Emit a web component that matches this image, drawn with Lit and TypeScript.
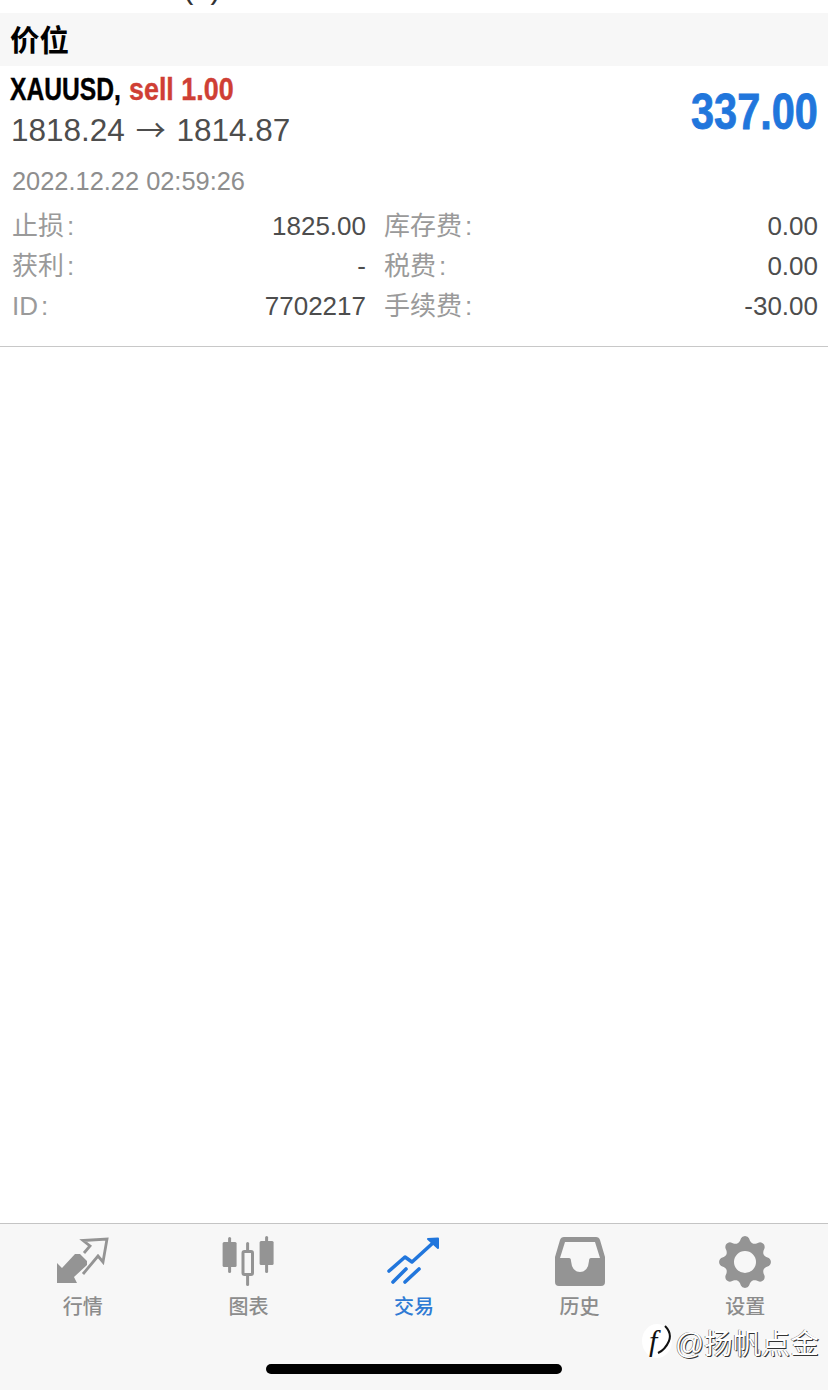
import { LitElement, html, css, svg } from "lit";
import { customElement } from "lit/decorators.js";

const GREY = "#949494";
const BLUE = "#2176dc";

function gearPath(): string {
  const pts: string[] = [];
  for (let i = 0; i < 192; i++) {
    const t = (i / 192) * Math.PI * 2;
    const c = Math.cos(8 * t);
    const r = 23 + 2.9 * Math.sign(c) * Math.pow(Math.abs(c), 0.7);
    pts.push(`${(27 + r * Math.sin(t)).toFixed(2)} ${(26 - r * Math.cos(t)).toFixed(2)}`);
  }
  return `M${pts.join(" L")} Z M27 15 A11 11 0 1 0 27 37 A11 11 0 1 0 27 15 Z`;
}

const icons = {
  quotes: svg`<svg width="54" height="52" viewBox="0 0 54 52">
    <path fill="${GREY}" d="M1 47 L1 27 L6 32 L19 18 L24 18 L31 25 L31 29 L18 41 L21 47 Z"/>
    <path fill="none" stroke="${GREY}" stroke-width="2.8" d="M28 17 L34 10 L27 4.5 L51 3 L47 26 L42 20 L27 38"/>
  </svg>`,
  chart: svg`<svg width="54" height="52" viewBox="0 0 54 52" fill="${GREY}">
    <rect x="7.1" y="1" width="3" height="36" rx="1.5"/><rect x="1.6" y="6" width="14" height="25" rx="1.5"/>
    <rect x="44.1" y="0" width="3" height="37" rx="1.5"/><rect x="38.6" y="5" width="14" height="24" rx="1.5"/>
    <rect x="25.1" y="6" width="3" height="44" rx="1.5"/>
    <rect x="22" y="15.5" width="9.5" height="23" rx="1.5" fill="#f7f7f7" stroke="${GREY}" stroke-width="3"/>
  </svg>`,
  trade: svg`<svg width="54" height="52" viewBox="0 0 54 52" fill="none" stroke="${BLUE}" stroke-width="3.6" stroke-linecap="round" stroke-linejoin="round">
    <path d="M2 35 L18 21 L25 26 L47 6"/>
    <path d="M41 3 L51 2.5 L51 12 Z" fill="${BLUE}" stroke-width="2"/>
    <path d="M6 46 L19 33 M18 46 L32 33"/>
  </svg>`,
  history: svg`<svg width="54" height="52" viewBox="0 0 54 52">
    <path fill="${GREY}" fill-rule="evenodd" d="M11 1 H43 Q46 1 47 4 L52 21 V46 Q52 50 48 50 H6 Q2 50 2 46 V21 L7 4 Q8 1 11 1 Z M12 6 L7 22 H16 Q18 22 18 25 Q19 36 27 36 Q35 36 36 25 Q36 22 38 22 H47 L42 6 Z"/>
  </svg>`,
  settings: svg`<svg width="54" height="52" viewBox="0 0 54 52">
    <path fill="${GREY}" fill-rule="evenodd" d="${gearPath()}"/>
  </svg>`,
};

const rows = [
  ["止损", "1825.00", "库存费", "0.00"],
  ["获利", "-", "税费", "0.00"],
  ["ID", "7702217", "手续费", "-30.00"],
];

const tabs = [
  { icon: icons.quotes, label: "行情" },
  { icon: icons.chart, label: "图表" },
  { icon: icons.trade, label: "交易", active: true },
  { icon: icons.history, label: "历史" },
  { icon: icons.settings, label: "设置" },
];

@customElement("app-root")
export class AppRoot extends LitElement {
  static styles = css`
    :host {
      display: flex;
      flex-direction: column;
      position: relative;
      height: 1390px;
      width: 828px;
      overflow: hidden;
      background: #fff;
      font-family: "Liberation Sans", "Noto Sans CJK SC", sans-serif;
    }
    .clip { height: 13px; overflow: hidden; padding-left: 183px; }
    .clip span { display: block; font-size: 31px; line-height: 31px; margin-top: -28px; color: #333; }
    .section {
      box-sizing: border-box;
      height: 53px;
      background: #f7f7f7;
      display: flex;
      align-items: center;
      padding: 3px 0 0 10px;
      font-size: 29.5px;
      font-weight: 700;
      color: #000;
      line-height: 50px;
    }
    .card { height: 280px; border-bottom: 1px solid #c8c8c8; padding: 0 10px 0 11px; }
    .top { display: flex; justify-content: space-between; align-items: center; height: 92px; }
    .left { align-self: flex-start; padding-top: 5px; }
    .sym { display: flex; gap: 8px; height: 36px; margin-left: -1px; font-size: 32px; line-height: 36px; font-weight: 700; white-space: nowrap; -webkit-text-stroke: 0.4px currentColor; }
    .sym span { display: inline-block; transform-origin: left center; }
    .name { color: #000; transform: scaleX(0.77); margin-right: -33px; }
    .side { color: #cf3f35; transform: scaleX(0.84); margin-right: -20px; }
    .price { font-size: 31.5px; line-height: 40px; color: #4d4d4d; margin-top: 3px; white-space: nowrap; }
    .arrow { font-family: "Noto Sans CJK SC", sans-serif; font-size: 30px; line-height: 30px; margin: 0 2px; }
    .profit { font-size: 50px; font-weight: 700; color: #2176dc; -webkit-text-stroke: 0.8px #2176dc; transform: scaleX(0.83); transform-origin: right center; margin-left: -26px; line-height: 56px; }
    .date { font-size: 25.4px; line-height: 30px; color: #8e8e8e; margin: 8px 0 0 1px; }
    .grid { display: grid; grid-template-columns: 354px 1fr; margin: 15px 0 0 1px; row-gap: 10px; }
    .pair { display: flex; justify-content: space-between; height: 30px; line-height: 30px; }
    .pair.right { padding-left: 18px; }
    .k { font-size: 26px; color: #9a9a9a; }
    .k b { font-weight: 400; margin-left: 3px; }
    .v { font-size: 26px; color: #4d4d4d; }
    .spacer { flex: 1; }
    .bar {
      height: 166px;
      background: #f7f7f7;
      border-top: 1px solid #c4c4c4;
      display: grid;
      grid-template-columns: repeat(5, 165.6px);
      position: relative;
    }
    .tab { display: flex; flex-direction: column; align-items: center; padding-top: 12px; color: #8c8c8c; font-size: 20px; font-weight: 500; }
    .tab.on { color: #2f7bd4; }
    .tab svg { display: block; }
    .tab span { line-height: 24px; margin-top: 7px; }
    .home { position: absolute; left: 266px; top: 140px; width: 296px; height: 10px; border-radius: 5px; background: #000; }
    .wm {
      position: absolute; left: 642px; top: 98px; display: flex; align-items: center;
      font-size: 28.7px; color: #fff; height: 38px; white-space: nowrap;
      text-shadow: 1px 1px 0 #333, -0.5px 0 0 #555;
    }
    .logo { position: relative; display: block; width: 30px; height: 34px; border-radius: 50%; background: #fff; margin-right: 3px; }
    .logo i { position: absolute; left: 7px; top: 0; font: italic 30px/34px "Liberation Serif", serif; color: #111; text-shadow: none; }
    .logo svg { position: absolute; left: 0; top: 0; }
  `;

  render() {
    return html`
      <div class="clip"><span>(2)</span></div>
      <div class="section">价位</div>
      <div class="card">
        <div class="top">
          <div class="left">
            <div class="sym"><span class="name">XAUUSD,</span><span class="side">sell 1.00</span></div>
            <div class="price">1818.24 <span class="arrow">→</span> 1814.87</div>
          </div>
          <div class="profit">337.00</div>
        </div>
        <div class="date">2022.12.22 02:59:26</div>
        <div class="grid">
          ${rows.map(
            (r) => html`
              <div class="pair"><span class="k">${r[0]}<b>:</b></span><span class="v">${r[1]}</span></div>
              <div class="pair right"><span class="k">${r[2]}<b>:</b></span><span class="v">${r[3]}</span></div>
            `
          )}
        </div>
      </div>
      <div class="spacer"></div>
      <div class="bar">
        ${tabs.map(
          (t) => html`<div class="tab ${t.active ? "on" : ""}">${t.icon}<span>${t.label}</span></div>`
        )}
        <div class="home"></div>
        <div class="wm">
          <span class="logo"><i>f</i><svg width="30" height="34" viewBox="0 0 30 34" fill="none" stroke="#111" stroke-width="2"><path d="M23 2 Q30 9 27 17 Q23 26 16 29"/></svg></span>@扬帆点金
        </div>
      </div>
    `;
  }
}
